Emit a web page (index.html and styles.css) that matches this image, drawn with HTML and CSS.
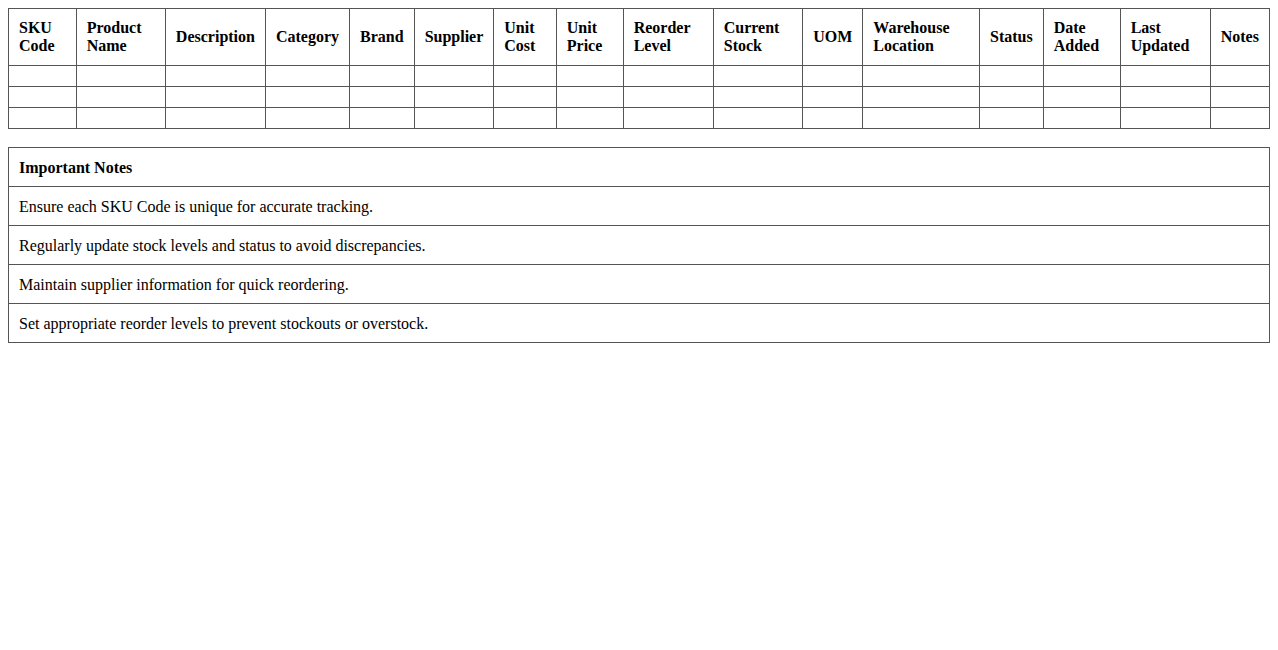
FILE: index.html
```html
<!DOCTYPE html>
<html>
<head>
<meta charset="utf-8">
<title>Inventory</title>
<link rel="stylesheet" href="styles.css">
</head>
<body>
<table class="grid">
  <thead>
    <tr>
      <th>SKU Code</th>
      <th>Product Name</th>
      <th>Description</th>
      <th>Category</th>
      <th>Brand</th>
      <th>Supplier</th>
      <th>Unit Cost</th>
      <th>Unit Price</th>
      <th>Reorder Level</th>
      <th>Current Stock</th>
      <th>UOM</th>
      <th>Warehouse Location</th>
      <th>Status</th>
      <th>Date Added</th>
      <th>Last Updated</th>
      <th>Notes</th>
    </tr>
  </thead>
  <tbody>
    <tr><td></td><td></td><td></td><td></td><td></td><td></td><td></td><td></td><td></td><td></td><td></td><td></td><td></td><td></td><td></td><td></td></tr>
    <tr><td></td><td></td><td></td><td></td><td></td><td></td><td></td><td></td><td></td><td></td><td></td><td></td><td></td><td></td><td></td><td></td></tr>
    <tr><td></td><td></td><td></td><td></td><td></td><td></td><td></td><td></td><td></td><td></td><td></td><td></td><td></td><td></td><td></td><td></td></tr>
  </tbody>
</table>

<table class="grid notes">
  <thead>
    <tr><th>Important Notes</th></tr>
  </thead>
  <tbody>
    <tr><td>Ensure each SKU Code is unique for accurate tracking.</td></tr>
    <tr><td>Regularly update stock levels and status to avoid discrepancies.</td></tr>
    <tr><td>Maintain supplier information for quick reordering.</td></tr>
    <tr><td>Set appropriate reorder levels to prevent stockouts or overstock.</td></tr>
  </tbody>
</table>
</body>
</html>
```

FILE: styles.css
```css
body {
  margin: 8px;
  font-family: "Liberation Serif", "Times New Roman", serif;
  font-size: 16px;
  color: #000;
  background: #fff;
}

.grid {
  width: 100%;
  border-collapse: collapse;
}

.grid th,
.grid td {
  border: 1px solid #555;
  padding: 10px;
  text-align: left;
  line-height: 18px;
}

.grid th {
  font-weight: bold;
}

.grid td {
  font-weight: normal;
}

.notes {
  margin-top: 18px;
}

.notes th,
.notes td {
  padding: 11px 10px 9px;
}
```
